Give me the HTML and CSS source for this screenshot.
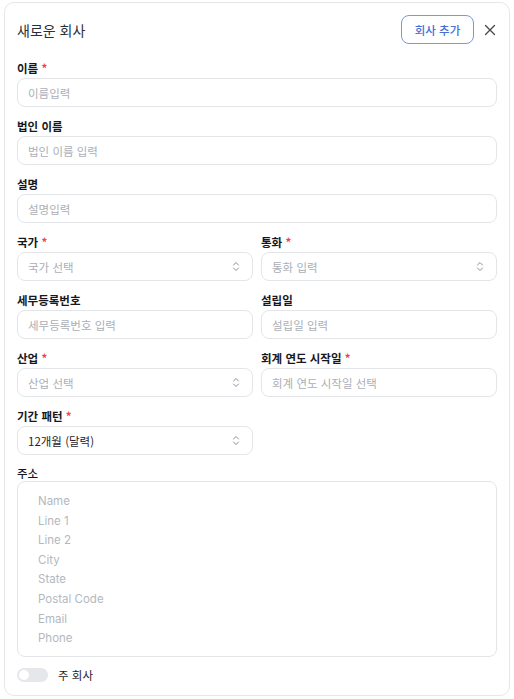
FILE: index.html
```html
<!DOCTYPE html>
<html lang="ko">
<head>
<meta charset="utf-8">
<link rel="stylesheet" href="styles.css">
</head>
<body>
<div class="card">
  <div class="header">
    <div class="title">새로운 회사</div>
    <div class="actions">
      <button class="btn-add">회사 추가</button>
      <svg class="close" width="12" height="12" viewBox="0 0 12 12"><path d="M1.5 1.5L10.5 10.5M10.5 1.5L1.5 10.5" stroke="#4b4b4b" stroke-width="1.4" stroke-linecap="round"/></svg>
    </div>
  </div>
  <div class="form">
    <div class="field">
      <label class="label">이름 <span class="req">*</span></label>
      <div class="input placeholder">이름입력</div>
    </div>
    <div class="field">
      <label class="label">법인 이름</label>
      <div class="input placeholder">법인 이름 입력</div>
    </div>
    <div class="field">
      <label class="label">설명</label>
      <div class="input placeholder">설명입력</div>
    </div>
    <div class="row">
      <div class="field">
        <label class="label">국가 <span class="req">*</span></label>
        <div class="input select placeholder"><span>국가 선택</span><svg class="chev" width="8" height="11" viewBox="0 0 8 11"><path d="M1.5 4L4 1.5L6.5 4M1.5 7L4 9.5L6.5 7" fill="none" stroke="#8a8f98" stroke-width="1" stroke-linecap="round" stroke-linejoin="round"/></svg></div>
      </div>
      <div class="field">
        <label class="label">통화 <span class="req">*</span></label>
        <div class="input select placeholder"><span>통화 입력</span><svg class="chev" width="8" height="11" viewBox="0 0 8 11"><path d="M1.5 4L4 1.5L6.5 4M1.5 7L4 9.5L6.5 7" fill="none" stroke="#8a8f98" stroke-width="1" stroke-linecap="round" stroke-linejoin="round"/></svg></div>
      </div>
    </div>
    <div class="row">
      <div class="field">
        <label class="label">세무등록번호</label>
        <div class="input placeholder">세무등록번호 입력</div>
      </div>
      <div class="field">
        <label class="label">설립일</label>
        <div class="input placeholder">설립일 입력</div>
      </div>
    </div>
    <div class="row">
      <div class="field">
        <label class="label">산업 <span class="req">*</span></label>
        <div class="input select placeholder"><span>산업 선택</span><svg class="chev" width="8" height="11" viewBox="0 0 8 11"><path d="M1.5 4L4 1.5L6.5 4M1.5 7L4 9.5L6.5 7" fill="none" stroke="#8a8f98" stroke-width="1" stroke-linecap="round" stroke-linejoin="round"/></svg></div>
      </div>
      <div class="field">
        <label class="label">회계 연도 시작일 <span class="req">*</span></label>
        <div class="input placeholder">회계 연도 시작일 선택</div>
      </div>
    </div>
    <div class="row">
      <div class="field">
        <label class="label">기간 패턴 <span class="req">*</span></label>
        <div class="input select value"><span>12개월 (달력)</span><svg class="chev" width="8" height="11" viewBox="0 0 8 11"><path d="M1.5 4L4 1.5L6.5 4M1.5 7L4 9.5L6.5 7" fill="none" stroke="#8a8f98" stroke-width="1" stroke-linecap="round" stroke-linejoin="round"/></svg></div>
      </div>
    </div>
    <div class="field address-field">
      <label class="label light">주소</label>
      <div class="address">
        <div>Name</div>
        <div>Line 1</div>
        <div>Line 2</div>
        <div>City</div>
        <div>State</div>
        <div>Postal Code</div>
        <div>Email</div>
        <div>Phone</div>
      </div>
    </div>
    <div class="toggle-row">
      <span class="toggle"><span class="knob"></span></span>
      <span class="toggle-label">주 회사</span>
    </div>
  </div>
</div>
</body>
</html>
```

FILE: styles.css
```css
* { box-sizing: border-box; }
body {
  margin: 0;
  background: #ffffff;
  font-family: "Inter", "Noto Sans CJK KR", sans-serif;
  color: #1f2328;
}
.card {
  margin: 2px 4px 0 4px;
  width: 506px;
  border: 1px solid #e6e7ea;
  border-radius: 10px;
  padding: 12px 12px 12px 12px;
  background: #fff;
}
.header {
  display: flex;
  align-items: center;
  justify-content: space-between;
  height: 29px;
  margin-bottom: 16px;
}
.title {
  font-family: "Noto Sans CJK KR", sans-serif;
  font-size: 14px;
  color: #2b2f36;
  font-weight: 400;
}
.actions {
  display: flex;
  align-items: center;
  gap: 10px;
}
.btn-add {
  height: 29px;
  width: 73px;
  border: 1px solid #7c96e3;
  border-radius: 8px;
  background: #fff;
  color: #4670d8;
  font-family: "Noto Sans CJK KR", sans-serif;
  font-size: 11.5px;
  font-weight: 500;
  padding: 0;
}
.close { display: block; margin-right: 1px; }
.form {
  display: flex;
  flex-direction: column;
  gap: 11px;
}
.row {
  display: grid;
  grid-template-columns: 1fr 1fr;
  gap: 8px;
}
.field {
  display: flex;
  flex-direction: column;
  gap: 2px;
}
.address-field {
  gap: 0;
  margin-top: -1px;
}
.label {
  font-family: "Noto Sans CJK KR", sans-serif;
  font-size: 11.5px;
  line-height: 16px;
  font-weight: 600;
  color: #16181d;
}
.label.light { font-weight: 500; }
.req { color: #ef4444; }
.input {
  height: 29px;
  border: 1px solid #e3e5e8;
  border-radius: 8px;
  padding: 0 10px;
  display: flex;
  align-items: center;
  justify-content: space-between;
  font-family: "Noto Sans CJK KR", sans-serif;
  font-size: 11.5px;
}
.placeholder { color: #abafb6; }
.value { color: #1f2328; }
.select { padding-right: 12px; }
.chev { display: block; }
.address {
  height: 176px;
  border: 1px solid #e3e5e8;
  border-radius: 8px;
  padding: 10px 20px;
  font-family: "Inter", sans-serif;
  font-size: 11.5px;
  line-height: 19.6px;
  color: #b4b8be;
}
.toggle-row {
  display: flex;
  align-items: center;
  gap: 10px;
  margin-top: -1px;
}
.toggle {
  width: 31px;
  height: 14px;
  border-radius: 7px;
  background: #e5e7eb;
  display: flex;
  align-items: center;
  padding: 0 2px;
}
.knob {
  width: 10px;
  height: 10px;
  border-radius: 50%;
  background: #fff;
}
.toggle-label {
  font-family: "Noto Sans CJK KR", sans-serif;
  font-size: 11.5px;
  color: #1f2328;
}
```
